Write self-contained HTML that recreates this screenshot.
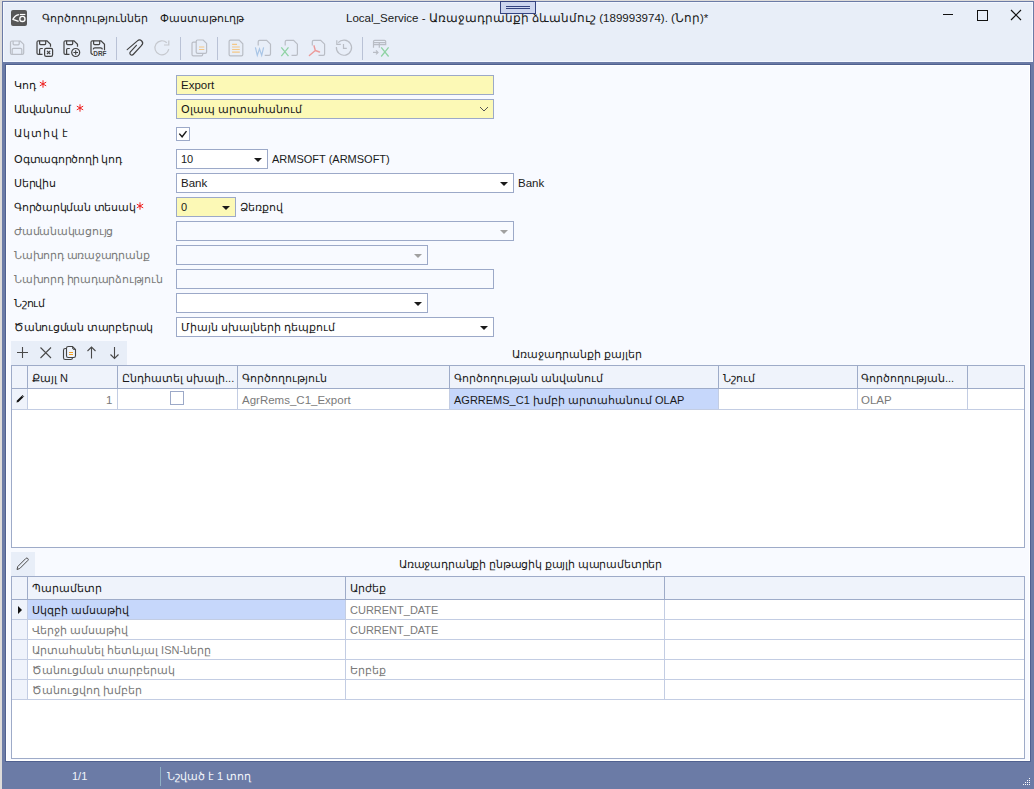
<!DOCTYPE html>
<html><head><meta charset="utf-8">
<style>
*{margin:0;padding:0;box-sizing:border-box}
html,body{width:1034px;height:789px;overflow:hidden;background:#dedcda}
body{position:relative;font-family:"Liberation Sans",sans-serif;font-size:11px;color:#1a1a1a}
.a{position:absolute}
#win{position:absolute;left:2px;top:1px;width:1032px;height:788px;background:#6b7ba6}
#top{position:absolute;left:3px;top:2px;width:1030px;height:60px;background:#e8eef8;border:1px solid #f3f7ff}
#panel{position:absolute;left:5px;top:64px;width:1026px;height:698px;border:1px solid #506190;background:#f8faff}
#panel2{position:absolute;left:6px;top:65px;width:1024px;height:696px;border:1px solid #ffffff}
.t{position:absolute;white-space:nowrap;line-height:13px}
.lbl{position:absolute;left:14px;white-space:nowrap;line-height:13px;letter-spacing:-0.22px}
.dis{color:#7a7a7a}
.req{color:#e8191b;font-size:13px}
.in{position:absolute;height:20px;border:1px solid #9ca9c8;background:#fff}
.in.y{background:#fcf9b6}
.in.d{background:#f8faff}
.in span{position:absolute;left:4px;top:3px;line-height:13px;white-space:nowrap}
.arr{position:absolute;width:0;height:0;border-left:4px solid transparent;border-right:4px solid transparent;border-top:4px solid #1a1a1a}
.arr.g{border-top-color:#a0a0a0}
.grid{position:absolute;border:1px solid #9eabc8;background:#fff}
.hl{position:absolute;background:#9eabc8}
.hdr{position:absolute;background:#eff3fb}
.sep{position:absolute;width:1px;background:#b3bed6}
</style></head>
<body>
<div id="win"></div>
<div id="top"></div>
<div id="panel"></div>
<div id="panel2"></div>

<!-- title bar -->
<div class="a" style="left:11px;top:10px;width:16px;height:16px;background:#575757;border-radius:2px"></div>
<svg class="a" style="left:11px;top:10px" width="16" height="16" viewBox="0 0 16 16"><path d="M7.9 4.6 C5.2 5 3.2 6.8 1.9 9.3 L7.6 11.3" stroke="#fff" stroke-width="1.4" fill="none" stroke-linejoin="round"/><path d="M8.8 4.5 H14.3" stroke="#fff" stroke-width="1.2"/><circle cx="11.4" cy="8.9" r="2.6" stroke="#fff" stroke-width="1.3" fill="none"/></svg>
<div class="t" style="left:42px;top:12px">Գործողություններ</div>
<div class="t" style="left:160px;top:12px">Փաստաթուղթ</div>
<div class="t" style="left:346px;top:12px;font-size:11.55px">Local_Service - Առաջադրանքի ձևանմուշ (189993974). (Նոր)*</div>
<div class="a" style="left:500px;top:1px;width:36px;height:13px;background:#cdd6ef;border:1px solid #34437f"></div>
<div class="a" style="left:506px;top:6px;width:24px;height:1px;background:#34437f"></div>
<div class="a" style="left:506px;top:8px;width:24px;height:1px;background:#34437f"></div>
<div class="a" style="left:943px;top:14px;width:10px;height:1px;background:#111"></div>
<div class="a" style="left:977px;top:10px;width:11px;height:11px;border:1px solid #111"></div>
<svg class="a" style="left:1010px;top:9px" width="12" height="12" viewBox="0 0 12 12"><path d="M1 1 L11 11 M11 1 L1 11" stroke="#111" stroke-width="1.2"/></svg>

<!-- toolbar -->
<svg class="a" style="left:0px;top:30px" width="400" height="32" viewBox="0 30 400 32">

<!-- disabled save -->
<g transform="translate(10.5,41)" fill="none" stroke="#b9bdc5" stroke-width="1.2">
<path d="M0 1.5 Q0 0 1.5 0 H9.8 L13.2 3.4 V11.9 Q13.2 13.4 11.7 13.4 H1.5 Q0 13.4 0 11.9 Z"/>
<path d="M2.6 0 V2.8 Q2.6 3.8 3.6 3.8 H7.7 Q8.7 3.8 8.7 2.8 V0"/>
<path d="M1.7 13.4 V8.6 Q1.7 7.3 3 7.3 H10 Q11.3 7.3 11.3 8.6 V13.4"/>
</g>
<!-- save x -->
<g transform="translate(37,40.8)" fill="none" stroke="#424242" stroke-width="1.2">
<path d="M5.5 13.6 H1.5 Q0 13.6 0 12.1 V1.5 Q0 0 1.5 0 H10 L13.5 3.5 V6"/>
<path d="M2.6 0 V2.8 Q2.6 3.8 3.6 3.8 H7.7 Q8.7 3.8 8.7 2.8 V0"/>
<path d="M2.6 13.6 V9 Q2.6 7.7 3.9 7.7 H5.8"/>
<rect x="7.6" y="7.6" width="8" height="8" rx="1.6"/>
<path d="M10 10 L13.2 13.2 M13.2 10 L10 13.2" stroke-width="1.1"/>
</g>
<!-- save plus -->
<g transform="translate(64,40.8)" fill="none" stroke="#424242" stroke-width="1.2">
<path d="M5.5 13.6 H1.5 Q0 13.6 0 12.1 V1.5 Q0 0 1.5 0 H10 L13.5 3.5 V6"/>
<path d="M2.6 0 V2.8 Q2.6 3.8 3.6 3.8 H7.7 Q8.7 3.8 8.7 2.8 V0"/>
<path d="M2.6 13.6 V9 Q2.6 7.7 3.9 7.7 H5.8"/>
<circle cx="11.7" cy="11.7" r="4"/>
<path d="M11.7 9.4 V14 M9.4 11.7 H14" stroke-width="1.1"/>
</g>
<!-- DRF -->
<g transform="translate(91,40.8)" fill="none" stroke="#424242" stroke-width="1.2">
<path d="M2 13.6 Q0 13.6 0 11.6 V1.5 Q0 0 1.5 0 H10 L13.5 3.5 V9.5"/>
<path d="M2.6 0 V2.8 Q2.6 3.8 3.6 3.8 H7.7 Q8.7 3.8 8.7 2.8 V0"/>
<path d="M2.2 8.6 Q2.4 7 4 7 H9.6 Q11.2 7 11.4 8.6"/>
</g>
<text x="93.3" y="56.2" font-family="Liberation Sans" font-weight="bold" font-size="6.4" fill="#424242" textLength="13.2" lengthAdjust="spacingAndGlyphs">DRF</text>
<!-- separators -->
<path d="M116.5 37 V60 M180.5 37 V60 M217.5 37 V60 M362.5 37 V60" stroke="#b9c2d6" stroke-width="1"/>
<!-- paperclip -->
<path d="M127.2 49.6 L137.4 40.9 A3 3 0 0 1 141.6 45.3 L133.2 54.5 A1.9 1.9 0 0 1 130.4 51.9 L136.4 45.3" fill="none" stroke="#424242" stroke-width="1.2" stroke-linecap="round"/>
<!-- redo -->
<path d="M168.8 49.2 A7 7 0 1 1 166.8 42.7" fill="none" stroke="#c5c8ce" stroke-width="1.2"/>
<path d="M168.8 40.4 V45 H164" fill="none" stroke="#c5c8ce" stroke-width="1.2"/>
<!-- copy -->
<g fill="none" stroke="#b9bdc5" stroke-width="1.2">
<path d="M196.2 42.2 H193.4 Q192 42.2 192 43.6 V54.4 Q192 55.8 193.4 55.8 H201.3 Q202.7 55.8 202.7 54.4 V53.3"/>
<path d="M197.6 40 H203.2 L206.6 43.4 V51.9 Q206.6 53.3 205.2 53.3 H197.6 Q196.2 53.3 196.2 51.9 V41.4 Q196.2 40 197.6 40 Z"/>
</g>
<path d="M199 47 H204.3 M199 49.5 H204.3" stroke="#f4c787" stroke-width="1.1"/>
<!-- doc -->
<path d="M230.5 40.2 H239.2 L242.8 43.8 V54.4 Q242.8 55.8 241.4 55.8 H230.5 Q229.1 55.8 229.1 54.4 V41.6 Q229.1 40.2 230.5 40.2 Z" fill="none" stroke="#b9bdc5" stroke-width="1.2"/>
<path d="M232.1 44.4 H237 M232.1 47 H239.8 M232.1 49.5 H239.8 M232.1 52.1 H239.8" stroke="#f4c787" stroke-width="1.1"/>
<!-- W doc -->
<g fill="none" stroke="#b9bdc5" stroke-width="1.2">
<path d="M258.2 45.5 V41.7 Q258.2 40.3 259.6 40.3 H266.6 L270.5 44.2 V53.9 Q270.5 55.3 269.1 55.3 H264.7"/>
<path d="M285.2 45.5 V41.7 Q285.2 40.3 286.6 40.3 H293.6 L297.4 44.2 V53.9 Q297.4 55.3 296 55.3 H291.5"/>
<path d="M312.3 45.5 V41.7 Q312.3 40.3 313.7 40.3 H320.7 L324.6 44.2 V53.9 Q324.6 55.3 323.2 55.3 H318.5"/>
</g>
<path d="M255.4 47.4 L257.3 55.4 L259.5 48.8 L261.7 55.4 L263.6 47.4" fill="none" stroke="#a8c5e6" stroke-width="1.2"/>
<path d="M281.3 47.4 L288.5 56.2 M288.5 47.4 L281.3 56.2" stroke="#8fd3a4" stroke-width="1.3"/>
<path d="M314 45.8 L315.3 50.5 M315.3 50.5 L309.4 55.5 M315.3 50.5 L319.5 52" fill="none" stroke="#eb9a9a" stroke-width="1.4" stroke-linecap="round"/>
<!-- history -->
<path d="M338.2 42.7 A7.6 7.6 0 1 1 336.4 47" fill="none" stroke="#b9bdc5" stroke-width="1.2"/>
<path d="M336.8 40.3 V44.3 H340.8" fill="none" stroke="#b9bdc5" stroke-width="1.2"/>
<path d="M343.5 44 V48.4 H346.8" fill="none" stroke="#b9bdc5" stroke-width="1.2"/>
<!-- grid x -->
<g fill="none" stroke="#b9bdc5" stroke-width="1.2">
<path d="M373.5 47.7 V41.6 Q373.5 40.4 374.7 40.4 H384.5 Q385.7 40.4 385.7 41.6 V44.6 H373.5 M373.5 42.6 H385.7 M379.3 42.6 V47.7"/>
<path d="M373 52.4 H378 M376 50.4 L378 52.4 L376 54.4"/>
</g>
<path d="M381.2 47.4 L388.6 56.5 M388.6 47.4 L381.2 56.5" stroke="#8fd3a4" stroke-width="1.3"/>
</svg>

<!-- form -->
<div class="lbl " style="top:79px">Կոդ</div>
<div class="lbl " style="top:103px">Անվանում</div>
<div class="lbl " style="top:127px;letter-spacing:0.9px">Ակտիվ է</div>
<div class="lbl " style="top:153px">Օգտագործողի կոդ</div>
<div class="lbl " style="top:177px">Սերվիս</div>
<div class="lbl " style="top:201px">Գործարկման տեսակ</div>
<div class="lbl dis" style="top:225px">Ժամանակացույց</div>
<div class="lbl dis" style="top:249px">Նախորդ առաջադրանք</div>
<div class="lbl dis" style="top:273px">Նախորդ իրադարձություն</div>
<div class="lbl " style="top:297px">Նշում</div>
<div class="lbl " style="top:321px">Ծանուցման տարբերակ</div>
<div class="in y" style="left:176px;top:75px;width:318px"><span style="font-size:11.5px">Export</span></div>
<div class="in y" style="left:176px;top:99px;width:318px"><span>Օլապ արտահանում</span></div>
<svg class="a" style="left:479px;top:106px" width="10" height="6"><path d="M1 1 L5 5 L9 1" stroke="#555" stroke-width="1" fill="none"/></svg>
<div class="a" style="left:176px;top:127px;width:14px;height:14px;border:1px solid #9ca9c8;background:#fff"></div>
<svg class="a" style="left:176px;top:127px" width="14" height="14"><path d="M3.3 6.6 L6.1 9.8 L10.5 4.1" stroke="#1a1a1a" stroke-width="1.4" fill="none"/></svg>
<div class="in " style="left:176px;top:149px;width:92px"><span>10</span></div><div class="arr" style="left:254px;top:158px"></div>
<div class="t" style="left:272px;top:153px">ARMSOFT (ARMSOFT)</div>
<div class="in " style="left:176px;top:173px;width:338px"><span style="font-size:11.5px">Bank</span></div><div class="arr" style="left:500px;top:182px"></div>
<div class="t" style="left:518px;top:177px;font-size:11.5px">Bank</div>
<div class="in y" style="left:176px;top:197px;width:60px"><span>0</span></div><div class="arr" style="left:222px;top:206px"></div>
<div class="t" style="left:240px;top:201px">Ձեռքով</div>
<div class="in d" style="left:176px;top:221px;width:338px"></div><div class="arr g" style="left:500px;top:230px"></div>
<div class="in d" style="left:176px;top:245px;width:252px"></div><div class="arr g" style="left:414px;top:254px"></div>
<div class="in d" style="left:176px;top:269px;width:318px"></div>
<div class="in " style="left:176px;top:293px;width:252px"></div><div class="arr" style="left:414px;top:302px"></div>
<div class="in " style="left:176px;top:317px;width:318px"><span>Միայն սխալների դեպքում</span></div><div class="arr" style="left:480px;top:326px"></div>
<!-- grids -->
<svg class="a" style="left:39px;top:80px" width="8" height="8" viewBox="0 0 8 8"><path d="M4 0.3 V7.7 M0.8 2.15 L7.2 5.85 M0.8 5.85 L7.2 2.15" stroke="#ee1c1c" stroke-width="1"/></svg><svg class="a" style="left:76px;top:104px" width="8" height="8" viewBox="0 0 8 8"><path d="M4 0.3 V7.7 M0.8 2.15 L7.2 5.85 M0.8 5.85 L7.2 2.15" stroke="#ee1c1c" stroke-width="1"/></svg><svg class="a" style="left:136px;top:202px" width="8" height="8" viewBox="0 0 8 8"><path d="M4 0.3 V7.7 M0.8 2.15 L7.2 5.85 M0.8 5.85 L7.2 2.15" stroke="#ee1c1c" stroke-width="1"/></svg>
<div class="a" style="left:11px;top:341px;width:116px;height:24px;background:#e8eef8"></div>
<svg class="a" style="left:11px;top:341px" width="116" height="24" viewBox="0 0 116 24">
<path d="M11.5 6 V17 M6 11.5 H17" stroke="#4a4a4a" stroke-width="1.1"/>
<path d="M29.5 6.5 L40 17 M40 6.5 L29.5 17" stroke="#4a4a4a" stroke-width="1.1"/>
<path d="M55.5 7.5 H54.3 Q52.5 7.5 52.5 9.3 V16.7 Q52.5 18.5 54.3 18.5 H59.7 Q61.5 18.5 61.5 16.7 V16.5" fill="none" stroke="#444" stroke-width="1.1"/>
<path d="M57.3 5.5 H61.5 L64.5 8.5 V14.7 Q64.5 16.5 62.7 16.5 H57.3 Q55.5 16.5 55.5 14.7 V7.3 Q55.5 5.5 57.3 5.5 Z" fill="#eef3fb" stroke="#444" stroke-width="1.1"/>
<path d="M61.5 5.5 V6.7 Q61.5 8.5 63.3 8.5 H64.5" fill="none" stroke="#444" stroke-width="1"/>
<path d="M58 11.5 H62 M58 13.5 H62" stroke="#f5a020" stroke-width="1.1"/>
<path d="M80.5 6 V17.5 M76.5 10 L80.5 6 L84.5 10" stroke="#4a4a4a" stroke-width="1.1" fill="none"/>
<path d="M103.5 6 V17.5 M99.5 13.5 L103.5 17.5 L107.5 13.5" stroke="#4a4a4a" stroke-width="1.1" fill="none"/>
</svg>
<div class="t" style="left:512px;top:348px">Առաջադրանքի քայլեր</div>
<div class="grid" style="left:11px;top:365px;width:1014px;height:183px"></div>
<div class="hdr" style="left:12px;top:366px;width:1012px;height:22px"></div>
<div class="hl" style="left:12px;top:388px;width:1012px;height:1px"></div>
<div class="hl" style="left:12px;top:409px;width:1012px;height:1px;background:#c3cde3"></div>
<div class="a" style="left:12px;top:389px;width:15px;height:20px;background:#eff3fb"></div>
<div class="hl" style="left:27px;top:366px;width:1px;height:22px"></div>
<div class="hl" style="left:27px;top:389px;width:1px;height:20px;background:#c3cde3"></div>
<div class="hl" style="left:117px;top:366px;width:1px;height:22px"></div>
<div class="hl" style="left:117px;top:389px;width:1px;height:20px;background:#c3cde3"></div>
<div class="hl" style="left:237px;top:366px;width:1px;height:22px"></div>
<div class="hl" style="left:237px;top:389px;width:1px;height:20px;background:#c3cde3"></div>
<div class="hl" style="left:449px;top:366px;width:1px;height:22px"></div>
<div class="hl" style="left:449px;top:389px;width:1px;height:20px;background:#c3cde3"></div>
<div class="hl" style="left:718px;top:366px;width:1px;height:22px"></div>
<div class="hl" style="left:718px;top:389px;width:1px;height:20px;background:#c3cde3"></div>
<div class="hl" style="left:857px;top:366px;width:1px;height:22px"></div>
<div class="hl" style="left:857px;top:389px;width:1px;height:20px;background:#c3cde3"></div>
<div class="hl" style="left:967px;top:366px;width:1px;height:22px"></div>
<div class="hl" style="left:967px;top:389px;width:1px;height:20px;background:#c3cde3"></div>
<div class="a" style="left:450px;top:389px;width:268px;height:20px;background:#c6d7fb"></div>
<div class="t" style="left:32px;top:372px">Քայլ N</div>
<div class="t" style="left:122px;top:372px">Ընդհատել սխալի...</div>
<div class="t" style="left:242px;top:372px">Գործողություն</div>
<div class="t" style="left:454px;top:372px">Գործողության անվանում</div>
<div class="t" style="left:723px;top:372px">Նշում</div>
<div class="t" style="left:861px;top:372px">Գործողության...</div>
<div class="t" style="left:106px;top:394px;color:#7a7a7a;font-size:11.5px">1</div>
<div class="a" style="left:170px;top:391px;width:14px;height:14px;border:1px solid #9ca9c8;background:#fff"></div>
<div class="t" style="left:242px;top:394px;color:#7a7a7a;font-size:11.5px">AgrRems_C1_Export</div>
<div class="t" style="left:454px;top:394px">AGRREMS_C1 խմբի արտահանում OLAP</div>
<div class="t" style="left:861px;top:394px;color:#7a7a7a;font-size:11.5px">OLAP</div>
<svg class="a" style="left:15px;top:394px" width="10" height="10" viewBox="0 0 10 10"><path d="M1.5 8.5 L2 6.5 L6.8 1.7 L8.3 3.2 L3.5 8 Z" fill="#111"/><path d="M7.3 1.2 L8.8 2.7" stroke="#111" stroke-width="1"/></svg>
<div class="a" style="left:11px;top:552px;width:24px;height:24px;background:#e8eef8"></div>
<svg class="a" style="left:11px;top:552px" width="24" height="24" viewBox="0 0 24 24"><path d="M6 17.5 L6.8 14.5 L14.8 6.5 Q15.8 5.5 16.8 6.5 Q17.8 7.5 16.8 8.5 L8.8 16.5 Z" fill="none" stroke="#4a4a4a" stroke-width="1"/></svg>
<div class="t" style="left:399px;top:558px;letter-spacing:-0.17px">Առաջադրանքի ընթացիկ քայլի պարամետրեր</div>
<div class="grid" style="left:11px;top:576px;width:1014px;height:183px"></div>
<div class="hdr" style="left:12px;top:577px;width:1012px;height:22px"></div>
<div class="hl" style="left:12px;top:599px;width:1012px;height:1px"></div>
<div class="a" style="left:12px;top:600px;width:15px;height:99px;background:#eff3fb"></div>
<div class="hl" style="left:12px;top:619px;width:1012px;height:1px;background:#c3cde3"></div>
<div class="hl" style="left:12px;top:639px;width:1012px;height:1px;background:#c3cde3"></div>
<div class="hl" style="left:12px;top:659px;width:1012px;height:1px;background:#c3cde3"></div>
<div class="hl" style="left:12px;top:679px;width:1012px;height:1px;background:#c3cde3"></div>
<div class="hl" style="left:12px;top:699px;width:1012px;height:1px;background:#c3cde3"></div>
<div class="hl" style="left:27px;top:577px;width:1px;height:22px"></div>
<div class="hl" style="left:27px;top:600px;width:1px;height:99px;background:#c3cde3"></div>
<div class="hl" style="left:345px;top:577px;width:1px;height:22px"></div>
<div class="hl" style="left:345px;top:600px;width:1px;height:99px;background:#c3cde3"></div>
<div class="hl" style="left:664px;top:577px;width:1px;height:22px"></div>
<div class="hl" style="left:664px;top:600px;width:1px;height:99px;background:#c3cde3"></div>
<div class="a" style="left:28px;top:600px;width:317px;height:19px;background:#c6d7fb"></div>
<div class="t" style="left:32px;top:582px">Պարամետր</div>
<div class="t" style="left:350px;top:582px">Արժեք</div>
<div class="a" style="left:18px;top:606px;width:0;height:0;border-top:4px solid transparent;border-bottom:4px solid transparent;border-left:4px solid #111"></div>
<div class="t" style="left:32px;top:604px;color:#1a1a1a">Սկզբի ամսաթիվ</div>
<div class="t" style="left:350px;top:604px;color:#7a7a7a">CURRENT_DATE</div>
<div class="t" style="left:32px;top:624px;color:#7a7a7a">Վերջի ամսաթիվ</div>
<div class="t" style="left:350px;top:624px;color:#7a7a7a">CURRENT_DATE</div>
<div class="t" style="left:32px;top:644px;color:#7a7a7a">Արտահանել հետևյալ ISN-ները</div>
<div class="t" style="left:32px;top:664px;color:#7a7a7a">Ծանուցման տարբերակ</div>
<div class="t" style="left:350px;top:664px;color:#7a7a7a">Երբեք</div>
<div class="t" style="left:32px;top:684px;color:#7a7a7a">Ծանուցվող խմբեր</div>
<div class="t" style="left:72px;top:770px;color:#f2f5fb">1/1</div>
<div class="a" style="left:160px;top:767px;width:1px;height:19px;background:#8fb0c4"></div>
<div class="t" style="left:167px;top:770px;color:#f2f5fb">Նշված է 1 տող</div>
<div class="a" style="left:1029px;top:778px;width:1px;height:1px;background:#fff"></div><div class="a" style="left:1027px;top:780px;width:1px;height:1px;background:#fff"></div><div class="a" style="left:1029px;top:780px;width:1px;height:1px;background:#fff"></div><div class="a" style="left:1025px;top:782px;width:1px;height:1px;background:#fff"></div><div class="a" style="left:1027px;top:782px;width:1px;height:1px;background:#fff"></div><div class="a" style="left:1029px;top:782px;width:1px;height:1px;background:#fff"></div><div class="a" style="left:1023px;top:784px;width:1px;height:1px;background:#fff"></div><div class="a" style="left:1025px;top:784px;width:1px;height:1px;background:#fff"></div><div class="a" style="left:1027px;top:784px;width:1px;height:1px;background:#fff"></div><div class="a" style="left:1029px;top:784px;width:1px;height:1px;background:#fff"></div>
</body></html>
